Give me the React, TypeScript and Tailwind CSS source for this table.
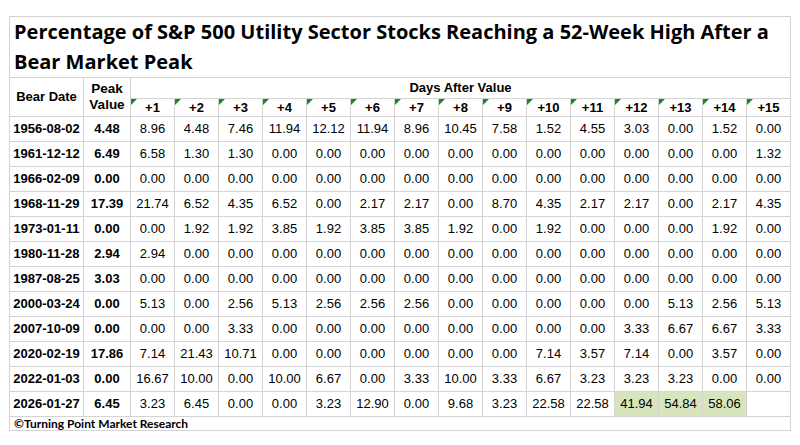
import React from "react";

const rows: [string, string, string[]][] = [
  ["1956-08-02", "4.48", ["8.96", "4.48", "7.46", "11.94", "12.12", "11.94", "8.96", "10.45", "7.58", "1.52", "4.55", "3.03", "0.00", "1.52", "0.00"]],
  ["1961-12-12", "6.49", ["6.58", "1.30", "1.30", "0.00", "0.00", "0.00", "0.00", "0.00", "0.00", "0.00", "0.00", "0.00", "0.00", "0.00", "1.32"]],
  ["1966-02-09", "0.00", ["0.00", "0.00", "0.00", "0.00", "0.00", "0.00", "0.00", "0.00", "0.00", "0.00", "0.00", "0.00", "0.00", "0.00", "0.00"]],
  ["1968-11-29", "17.39", ["21.74", "6.52", "4.35", "6.52", "0.00", "2.17", "2.17", "0.00", "8.70", "4.35", "2.17", "2.17", "0.00", "2.17", "4.35"]],
  ["1973-01-11", "0.00", ["0.00", "1.92", "1.92", "3.85", "1.92", "3.85", "3.85", "1.92", "0.00", "1.92", "0.00", "0.00", "0.00", "1.92", "0.00"]],
  ["1980-11-28", "2.94", ["2.94", "0.00", "0.00", "0.00", "0.00", "0.00", "0.00", "0.00", "0.00", "0.00", "0.00", "0.00", "0.00", "0.00", "0.00"]],
  ["1987-08-25", "3.03", ["0.00", "0.00", "0.00", "0.00", "0.00", "0.00", "0.00", "0.00", "0.00", "0.00", "0.00", "0.00", "0.00", "0.00", "0.00"]],
  ["2000-03-24", "0.00", ["5.13", "0.00", "2.56", "5.13", "2.56", "2.56", "2.56", "0.00", "0.00", "0.00", "0.00", "0.00", "5.13", "2.56", "5.13"]],
  ["2007-10-09", "0.00", ["0.00", "0.00", "3.33", "0.00", "0.00", "0.00", "0.00", "0.00", "0.00", "0.00", "0.00", "3.33", "6.67", "6.67", "3.33"]],
  ["2020-02-19", "17.86", ["7.14", "21.43", "10.71", "0.00", "0.00", "0.00", "0.00", "0.00", "0.00", "7.14", "3.57", "7.14", "0.00", "3.57", "0.00"]],
  ["2022-01-03", "0.00", ["16.67", "10.00", "0.00", "10.00", "6.67", "0.00", "3.33", "10.00", "3.33", "6.67", "3.23", "3.23", "3.23", "0.00", "0.00"]],
  ["2026-01-27", "6.45", ["3.23", "6.45", "0.00", "0.00", "3.23", "12.90", "0.00", "9.68", "3.23", "22.58", "22.58", "41.94", "54.84", "58.06", ""]],
];

const days = Array.from({ length: 15 }, (_, i) => `+${i + 1}`);

export default function App() {
  return (
    <div className="w-[800px] h-[445px] bg-white pt-[16px] pl-[9px]">
      <table
        className="table-fixed border-collapse w-[782px] text-[13px] text-black"
        style={{ fontFamily: '"Liberation Sans", Arial, sans-serif' }}
      >
        <colgroup>
          <col className="w-[74px]" />
          <col className="w-[47px]" />
          {days.map((d) => (
            <col key={d} className="w-[44px]" />
          ))}
        </colgroup>
        <tbody>
          <tr>
            <td
              colSpan={17}
              className="h-[59px] border border-[#d4d4d4] pl-[4px] align-middle font-bold text-[20px] leading-[30px] whitespace-nowrap"
              style={{ fontFamily: '"Open Sans", sans-serif' }}
            >
              Percentage of S&amp;P 500 Utility Sector Stocks Reaching a 52-Week High After a
              <br />
              Bear Market Peak
            </td>
          </tr>
          <tr>
            <td rowSpan={2} className="border border-[#d4d4d4] text-center font-bold align-middle">
              Bear Date
            </td>
            <td rowSpan={2} className="border border-[#d4d4d4] text-center font-bold align-middle leading-[16px] text-[13.5px]">
              Peak
              <br />
              Value
            </td>
            <td colSpan={15} className="h-[21px] border border-[#d4d4d4] text-center font-bold align-middle">
              Days After Value
            </td>
          </tr>
          <tr>
            {days.map((d) => (
              <td key={d} className="relative h-[18px] border border-[#d4d4d4] text-center font-bold align-middle leading-none">
                <span className="absolute left-0 top-0 w-0 h-0 border-t-[6px] border-r-[6px] border-t-[#1a8a1a] border-r-transparent" />
                {d}
              </td>
            ))}
          </tr>
          {rows.map(([date, peak, vals]) => (
            <tr key={date}>
              <td className="h-[25px] border border-[#d4d4d4] text-center font-bold align-middle">{date}</td>
              <td className="border border-[#d4d4d4] text-center font-bold align-middle">{peak}</td>
              {vals.map((v, i) => {
                const hl = date === "2026-01-27" && i >= 11 && i <= 13;
                return (
                  <td
                    key={i}
                    className={
                      hl
                        ? "border border-[#d4d4d4] text-center align-middle bg-[#d8e4bc]"
                        : "border border-[#d4d4d4] text-center align-middle"
                    }
                  >
                    {v}
                  </td>
                );
              })}
            </tr>
          ))}
          <tr>
            <td
              colSpan={17}
              className="h-[14px] border border-[#d4d4d4] pl-[4px] align-middle font-bold text-[12px] leading-[12px]"
              style={{ fontFamily: 'Lato, "Open Sans", sans-serif' }}
            >
              ©Turning Point Market Research
            </td>
          </tr>
        </tbody>
      </table>
    </div>
  );
}
